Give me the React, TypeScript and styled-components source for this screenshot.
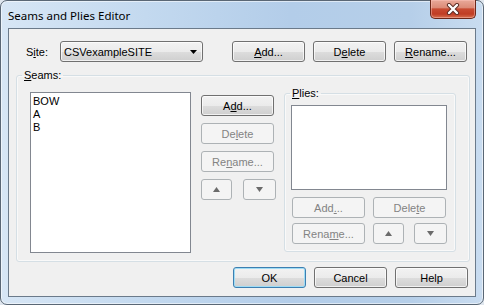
import * as React from 'react';
import styled, { createGlobalStyle, css } from 'styled-components';

const GlobalStyle = createGlobalStyle`
    html, body {
        margin: 0;
        padding: 0;
        background: #dfe6ee;
    }
    * {
        box-sizing: border-box;
    }
`;

const Window = styled.div`
    width: 484px;
    height: 305px;
    display: flex;
    flex-direction: column;
    padding: 0 7px 7px 7px;
    border: 1px solid #5a6775;
    border-radius: 7px;
    background: linear-gradient(90deg, #d7e6f5 0%, #c3d9ef 30%, #b3cde9 60%, #b6cfe9 85%, #c9dcf0 100%);
    box-shadow: inset 0 0 0 1px rgba(255, 255, 255, 0.55);
    font-family: "Liberation Sans", Arial, sans-serif;
    font-size: 11px;
    color: #000;
`;

const TitleBar = styled.div`
    height: 28px;
    display: flex;
    align-items: flex-start;
    justify-content: space-between;
`;

const Title = styled.div`
    margin-top: 7px;
    font-family: "Noto Sans", "Open Sans", sans-serif;
    font-size: 11.5px;
    line-height: 16px;
    color: #000;
`;

const CloseButton = styled.div`
    width: 46px;
    height: 19px;
    margin-top: -1px;
    border: 1px solid #6b2719;
    border-top: none;
    border-radius: 0 0 5px 5px;
    background: linear-gradient(180deg, #e9a99a 0%, #dc8b78 42%, #c84a31 50%, #c03d24 78%, #d7704f 100%);
    box-shadow: inset 0 0 0 1px rgba(255, 200, 190, 0.45);
    display: flex;
    align-items: center;
    justify-content: center;
`;

const Client = styled.div`
    flex: 1;
    display: flex;
    flex-direction: column;
    padding: 12px 7px 8px 7px;
    background: #f0f0f0;
    border: 1px solid #6b7a8a;
`;

const SiteRow = styled.div`
    display: flex;
    align-items: center;
    height: 21px;
`;

const SiteLabel = styled.label`
    margin-left: 10px;
    width: 34px;
`;

const Combo = styled.div`
    width: 143px;
    height: 21px;
    display: flex;
    align-items: center;
    justify-content: space-between;
    padding: 0 5px 0 3px;
    border: 1px solid #707070;
    border-radius: 3px;
    background: linear-gradient(180deg, #f2f2f2 0%, #ebebeb 50%, #dddddd 51%, #cfcfcf 100%);
    box-shadow: inset 0 0 0 1px rgba(255, 255, 255, 0.7);
`;

const ButtonGroup = styled.div`
    display: flex;
    gap: 8px;
    margin-left: auto;
    margin-right: 1px;
`;

const Button = styled.div<{ $disabled?: boolean; $default?: boolean; $width?: number }>`
    width: ${p => p.$width ?? 73}px;
    height: 21px;
    flex-shrink: 0;
    display: flex;
    align-items: center;
    justify-content: center;
    border-radius: 3px;
    white-space: nowrap;
    ${p => p.$disabled
        ? css`
            border: 1px solid #adb2b5;
            background: #f4f4f4;
            color: #838383;
        `
        : css`
            border: 1px solid #707070;
            background: linear-gradient(180deg, #f2f2f2 0%, #ebebeb 50%, #dddddd 51%, #cfcfcf 100%);
            box-shadow: inset 0 0 0 1px rgba(255, 255, 255, 0.7);
            color: #000;
        `}
    ${p => p.$default && css`
        border-color: #3c7fb1;
        box-shadow: inset 0 0 0 1px #9fdcf5;
    `}
`;

const U = styled.span`
    text-decoration: underline;
    text-underline-offset: 1px;
`;

const Group = styled.fieldset<{ $width: number }>`
    margin: 0;
    padding: 0;
    min-inline-size: 0;
    flex-shrink: 0;
    width: ${p => p.$width}px;
    border: 1px solid #d5dfe5;
    border-radius: 3px;
    box-shadow: inset 0 0 0 1px rgba(255, 255, 255, 0.6);
`;

const GroupLabel = styled.legend`
    margin-left: 5px;
    padding: 0 2px;
    line-height: 13px;
`;

const SeamsGroup = styled(Group)`
    margin-top: 7px;
`;

const SeamsBody = styled.div`
    display: flex;
    align-items: flex-start;
    padding: 5px 13px 8px 13px;
`;

const ListBox = styled.div<{ $w: number; $h: number }>`
    width: ${p => p.$w}px;
    height: ${p => p.$h}px;
    flex-shrink: 0;
    padding: 2px 2px;
    background: #fff;
    border: 1px solid #828790;
    line-height: 13px;
`;

const SeamsList = styled(ListBox)`
    margin-top: 5px;
`;

const ButtonColumn = styled.div`
    width: 73px;
    flex-shrink: 0;
    display: flex;
    flex-direction: column;
    gap: 7px;
    margin: 8px 0 0 10px;
`;

const ArrowRow = styled.div<{ $gap: number }>`
    display: flex;
    gap: ${p => p.$gap}px;
`;

const PliesGroup = styled(Group)`
    margin-left: 10px;
`;

const PliesBody = styled.div`
    display: flex;
    flex-direction: column;
    padding: 5px 8px 7px 6px;
`;

const PliesButtons = styled.div`
    display: flex;
    flex-direction: column;
    gap: 5px;
    margin: 7px 0 0 1px;
`;

const ButtonRow = styled.div`
    display: flex;
    gap: 8px;
`;

const Footer = styled.div`
    display: flex;
    justify-content: flex-end;
    gap: 8px;
    margin-top: 5px;
`;

const Triangle = ({ up }: { up?: boolean }) => (
    <svg width="7" height="5" viewBox="0 0 7 5">
        <polygon points={up ? '3.5,0 7,5 0,5' : '0,0 7,0 3.5,5'} fill="#6b6b6b" />
    </svg>
);

const seams = ['BOW', 'A', 'B'];

export default function App() {
    return (
        <>
            <GlobalStyle />
            <Window>
                <TitleBar>
                    <Title>Seams and Plies Editor</Title>
                    <CloseButton>
                        <svg width="14" height="12" viewBox="0 0 14 12">
                            <path d="M3 2 L11 10 M11 2 L3 10" stroke="#5a2a22" strokeWidth="4.2" strokeLinecap="round" />
                            <path d="M3 2 L11 10 M11 2 L3 10" stroke="#fff" strokeWidth="2.4" strokeLinecap="round" />
                        </svg>
                    </CloseButton>
                </TitleBar>
                <Client>
                    <SiteRow>
                        <SiteLabel>S<U>i</U>te:</SiteLabel>
                        <Combo>
                            <span>CSVexampleSITE</span>
                            <svg width="7" height="4" viewBox="0 0 7 4">
                                <polygon points="0,0 7,0 3.5,4" fill="#000" />
                            </svg>
                        </Combo>
                        <ButtonGroup>
                            <Button><U>A</U>dd...</Button>
                            <Button>D<U>e</U>lete</Button>
                            <Button><U>R</U>ename...</Button>
                        </ButtonGroup>
                    </SiteRow>

                    <SeamsGroup $width={454}>
                        <GroupLabel><U>S</U>eams:</GroupLabel>
                        <SeamsBody>
                            <SeamsList $w={161} $h={161}>
                                {seams.map(s => <div key={s}>{s}</div>)}
                            </SeamsList>
                            <ButtonColumn>
                                <Button>A<U>d</U>d...</Button>
                                <Button $disabled>De<U>l</U>ete</Button>
                                <Button $disabled>Re<U>n</U>ame...</Button>
                                <ArrowRow $gap={11}>
                                    <Button $disabled $width={31}><Triangle up /></Button>
                                    <Button $disabled $width={33}><Triangle /></Button>
                                </ArrowRow>
                            </ButtonColumn>
                            <PliesGroup $width={172}>
                                <GroupLabel><U>P</U>lies:</GroupLabel>
                                <PliesBody>
                                    <ListBox $w={156} $h={85} />
                                    <PliesButtons>
                                        <ButtonRow>
                                            <Button $disabled>Add<U>.</U>..</Button>
                                            <Button $disabled>Dele<U>t</U>e</Button>
                                        </ButtonRow>
                                        <ButtonRow>
                                            <Button $disabled>Rena<U>m</U>e...</Button>
                                            <ArrowRow $gap={10}>
                                                <Button $disabled $width={31}><Triangle up /></Button>
                                                <Button $disabled $width={33}><Triangle /></Button>
                                            </ArrowRow>
                                        </ButtonRow>
                                    </PliesButtons>
                                </PliesBody>
                            </PliesGroup>
                        </SeamsBody>
                    </SeamsGroup>

                    <Footer>
                        <Button $default>OK</Button>
                        <Button>Cancel</Button>
                        <Button>Help</Button>
                    </Footer>
                </Client>
            </Window>
        </>
    );
}
